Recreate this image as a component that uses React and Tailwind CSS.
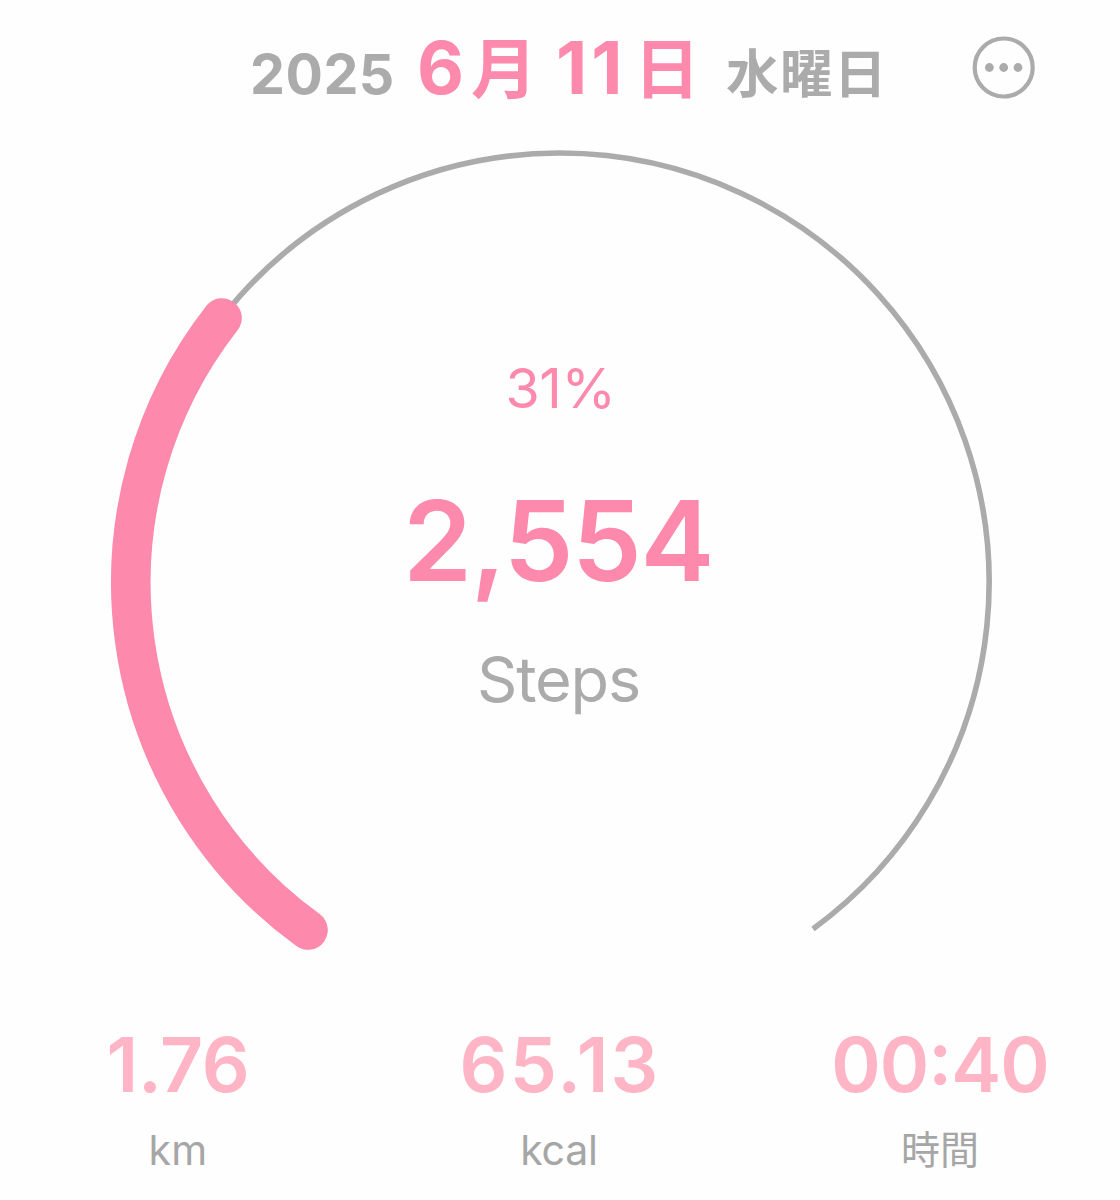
const stats = [
  { value: '1.76', unit: 'km', valueClass: 'tracking-[-0.3px]', unitClass: 'text-[41px] tracking-[0.4px]' },
  { value: '65.13', unit: 'kcal', valueClass: 'pl-[2px] tracking-[2.2px]', unitClass: 'text-[41px] tracking-[-0.2px]' },
  { value: '00:40', unit: '時間', valueClass: 'tracking-[-1px]', unitClass: 'text-[39px]' },
];

function MoreButton() {
  return (
    <button type="button" aria-label="More" className="mt-[35px] mr-[84px] ml-auto h-16 w-16 shrink-0">
      <svg viewBox="0 0 64 64" className="block h-16 w-16">
        <circle cx="31.7" cy="32.5" r="29" fill="none" stroke="#ababab" strokeWidth="4.2" />
        <circle cx="17.4" cy="32.5" r="4.4" fill="#ababab" />
        <circle cx="31.7" cy="32.5" r="4.4" fill="#ababab" />
        <circle cx="46" cy="32.5" r="4.4" fill="#ababab" />
      </svg>
    </button>
  );
}

function Header() {
  return (
    <header className="flex h-[136px] items-start pl-[250px] font-bold">
      <h1 className="mt-[18px] flex items-baseline leading-[100px] whitespace-nowrap text-[#ababab]">
        <span className="w-[167px] text-[55.5px] tracking-[0.5px]">2025</span>
        <span className="flex w-[309px] items-baseline text-[72.5px] text-[#fd89ac]">
          <span className="w-[54px]">6</span>
          <span className="w-[85px] -translate-y-[1.5px] text-[66px]">月</span>
          <span className="w-[78px] tracking-[4px]">11</span>
          <span className="-translate-y-[1.5px] text-[66px]">日</span>
        </span>
        <span className="-translate-y-px text-[52.5px] tracking-[1.5px]">水曜日</span>
      </h1>
      <MoreButton />
    </header>
  );
}

function StepGauge() {
  return (
    <section className="grid h-[880px]">
      <svg viewBox="0 136 1120 880" className="col-start-1 row-start-1 block h-[880px] w-[1120px]">
        <path d="M308 930 A429.3 429.3 0 1 1 813 929" fill="none" stroke="#ababab" strokeWidth="5.6" />
        <path
          d="M308 930 A429.3 429.3 0 0 1 222 318"
          fill="none"
          stroke="#fd89ac"
          strokeWidth="39.6"
          strokeLinecap="round"
        />
      </svg>
      <div className="col-start-1 row-start-1 flex flex-col items-center pt-[212px] text-[#fd89ac]">
        <p className="h-[122px] pl-px text-[55.5px] leading-[80px] tracking-[-0.5px]">31%</p>
        <p className="h-[166px] pr-[4px] text-[111px] leading-[142px] font-semibold tracking-[-1.4px]">2,554</p>
        <p className="pr-[3px] text-[63px] leading-[86px] tracking-[-1.2px] text-[#ababab]">Steps</p>
      </div>
    </section>
  );
}

function Stat({ value, unit, valueClass, unitClass }) {
  const [hours, minutes] = value.split(':');
  return (
    <div className="flex w-60 flex-col items-center">
      <span className={`text-[75px] leading-[96px] font-semibold text-[#ffb5c5] ${valueClass}`}>
        {hours}
        {minutes && <span className="relative -top-2">:</span>}
        {minutes}
      </span>
      <span className={`mt-[9px] leading-[56px] text-[#a6a6a6] ${unitClass}`}>{unit}</span>
    </div>
  );
}

export default function App() {
  return (
    <main className="h-[1200px] w-[1120px] overflow-hidden bg-[#fefefe] font-['Inter','Noto_Sans_CJK_JP',sans-serif]">
      <Header />
      <StepGauge />
      <section className="flex justify-between pt-[0.7px] pr-[60px] pl-[58px]">
        {stats.map((stat) => (
          <Stat key={stat.unit} {...stat} />
        ))}
      </section>
    </main>
  );
}
